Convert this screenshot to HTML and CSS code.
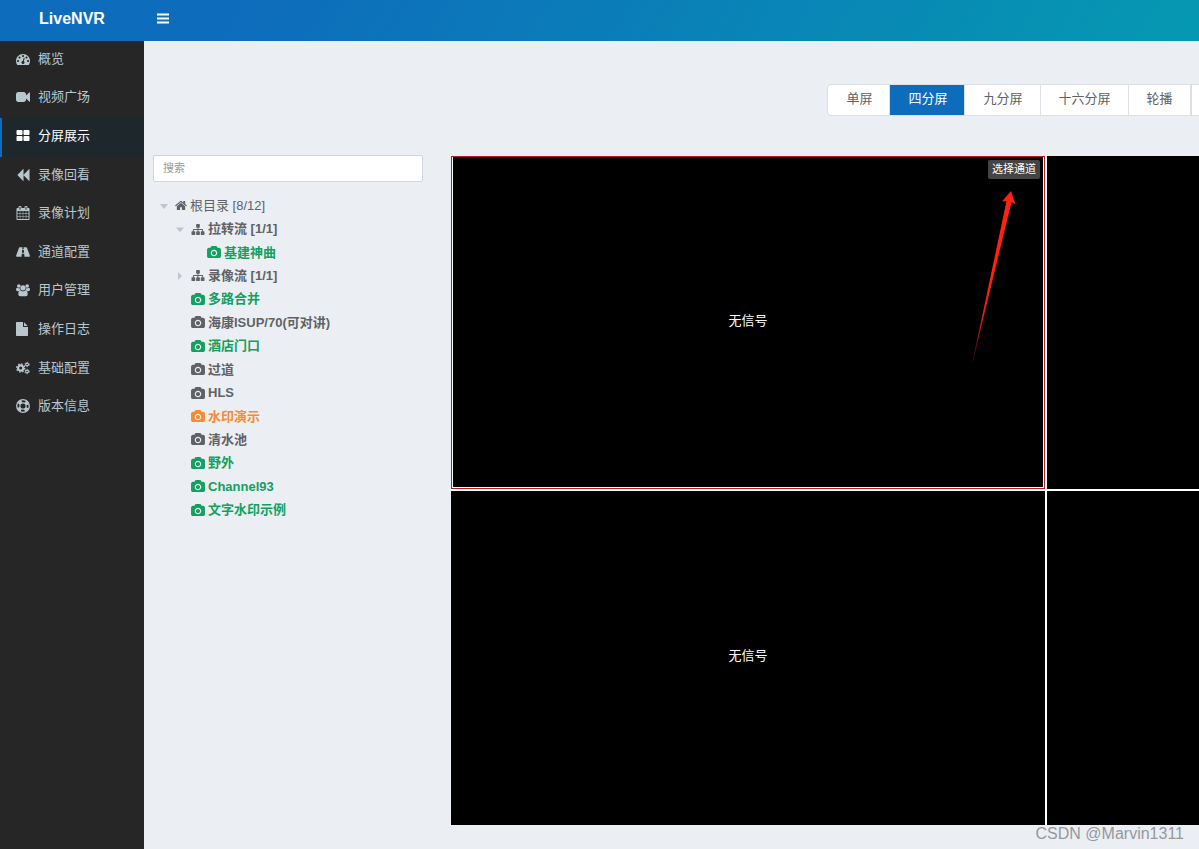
FILE: index.html
```html
<!DOCTYPE html>
<html lang="zh-CN">
<head>
<meta charset="utf-8">
<title>LiveNVR</title>
<meta name="viewport" content="width=device-width, initial-scale=1">
<link rel="stylesheet" href="styles.css">
</head>
<body>
<svg class="sprite" aria-hidden="true">
  <symbol id="i-dash" viewBox="0 0 1792 1792"><path d="M384 1152q0-53-37.500-90.500t-90.500-37.500-90.500 37.500-37.500 90.500 37.500 90.500 90.500 37.500 90.500-37.500 37.500-90.500zm192-448q0-53-37.500-90.500t-90.500-37.500-90.500 37.500-37.500 90.500 37.500 90.500 90.500 37.500 90.500-37.500 37.500-90.500zm428 481l101-382q6-26-7.500-48.500t-38.500-29.500-48 6.500-30 39.500l-101 382q-60 5-107 43.500t-63 98.500q-20 77 20 146t117 89 146-20 89-117q16-60-6-117t-72-91zm660-33q0-53-37.500-90.500t-90.500-37.500-90.500 37.500-37.500 90.500 37.500 90.500 90.500 37.500 90.500-37.500 37.500-90.500zm-640-640q0-53-37.500-90.500t-90.500-37.500-90.500 37.500-37.500 90.500 37.500 90.500 90.500 37.500 90.500-37.500 37.500-90.500zm448 192q0-53-37.500-90.500t-90.500-37.500-90.500 37.500-37.500 90.500 37.500 90.500 90.500 37.500 90.500-37.500 37.500-90.500zm320 448q0 261-141 483-19 29-54 29h-1402q-35 0-54-29-141-221-141-483 0-182 71-348t191-286 286-191 348-71 348 71 286 191 191 286 71 348z"/></symbol>
  <symbol id="i-video" viewBox="0 0 1792 1792"><path d="M1792 352v1088q0 42-39 59-13 5-25 5-27 0-45-19l-403-403v166q0 119-84.500 203.500t-203.500 84.500h-704q-119 0-203.500-84.500t-84.500-203.500v-704q0-119 84.500-203.500t203.500-84.500h704q119 0 203.500 84.500t84.500 203.500v165l403-402q18-19 45-19 12 0 25 5 39 17 39 59z"/></symbol>
  <symbol id="i-split" viewBox="0 0 1792 1792"><path d="M832 1024v384q0 52-38 90t-90 38h-512q-52 0-90-38t-38-90v-384q0-52 38-90t90-38h512q52 0 90 38t38 90zm0-768v384q0 52-38 90t-90 38h-512q-52 0-90-38t-38-90v-384q0-52 38-90t90-38h512q52 0 90 38t38 90zm896 768v384q0 52-38 90t-90 38h-512q-52 0-90-38t-38-90v-384q0-52 38-90t90-38h512q52 0 90 38t38 90zm0-768v384q0 52-38 90t-90 38h-512q-52 0-90-38t-38-90v-384q0-52 38-90t90-38h512q52 0 90 38t38 90z"/></symbol>
  <symbol id="i-back" viewBox="0 0 1792 1792"><path d="M1683 141q19-19 32-13t13 32v1472q0 26-13 32t-32-13l-710-710q-9-9-13-19v710q0 26-13 32t-32-13l-710-710q-19-19-19-45t19-45l710-710q19-19 32-13t13 32v710q4-10 13-19z"/></symbol>
  <symbol id="i-cal" viewBox="0 0 1792 1792"><path d="M192 1664h288v-288h-288v288zm352 0h320v-288h-320v288zm-352-352h288v-320h-288v320zm352 0h320v-320h-320v320zm-352-384h288v-288h-288v288zm736 736h320v-288h-320v288zm-384-736h320v-288h-320v288zm768 736h288v-288h-288v288zm-384-352h320v-320h-320v320zm-352-864v-288q0-13-9.500-22.500t-22.500-9.500h-64q-13 0-22.500 9.500t-9.500 22.500v288q0 13 9.500 22.500t22.500 9.500h64q13 0 22.500-9.500t9.500-22.500zm736 864h288v-320h-288v320zm-384-384h320v-288h-320v288zm384 0h288v-288h-288v288zm32-480v-288q0-13-9.500-22.500t-22.500-9.500h-64q-13 0-22.500 9.500t-9.500 22.500v288q0 13 9.500 22.500t22.500 9.500h64q13 0 22.500-9.500t9.500-22.500zm384-64v1280q0 52-38 90t-90 38h-1408q-52 0-90-38t-38-90v-1280q0-52 38-90t90-38h128v-96q0-66 47-113t113-47h64q66 0 113 47t47 113v96h384v-96q0-66 47-113t113-47h64q66 0 113 47t47 113v96h128q52 0 90 38t38 90z"/></symbol>
  <symbol id="i-road" viewBox="0 0 16 16"><path d="M4.300 2.500h3.100l-.2 2h1.600l-.2-2h3.100q.5 0 .8.700l3.200 8.600q.5 1.700-.6 1.700H9.700l-.3-3.500H6.600l-.3 3.500H.900q-1.100 0-.6-1.700l3.200-8.600q.3-.7.800-.7zM7.100 5.500l-.3 3.300h2.400l-.3-3.300z" fill-rule="evenodd"/></symbol>
  <symbol id="i-users" viewBox="0 0 17 16"><circle cx="3.400" cy="3.200" r="2.200"/><circle cx="13.600" cy="3.200" r="2.200"/><circle cx="8.500" cy="5.400" r="3.200"/><path d="M1.700 5.400q1.500 1 3 .4.100 1.500 1 2.600-1.300.1-2.100 1.100H2Q0 9.500 0 7.800q0-2.700 1.700-2.400zM15.300 5.400q-1.500 1-3 .4-.1 1.500-1 2.600 1.300.1 2.100 1.100H15q2 0 2-1.700 0-2.700-1.700-2.400zM5.700 8.700q2.800 2 5.600 0 2.900.1 2.900 4.500 0 2.300-2.300 2.300H5.100q-2.300 0-2.300-2.300 0-4.400 2.900-4.500z"/></symbol>
  <symbol id="i-file" viewBox="128 0 1792 1792"><path d="M1152 512v-472q22 14 36 28l408 408q14 14 28 36h-472zm-128 32q0 40 28 68t68 28h544v1056q0 40-28 68t-68 28h-1344q-40 0-68-28t-28-68v-1600q0-40 28-68t68-28h800v544z"/></symbol>
  <symbol id="i-cogs" viewBox="0 0 17 16"><g fill="none" stroke="currentColor"><circle cx="5.700" cy="8" r="3.200" stroke-width="2.600"/><circle cx="5.700" cy="8" r="4.900" stroke-width="1.600" stroke-dasharray="1.900 1.950"/><circle cx="13.400" cy="3.700" r="1.700" stroke-width="1.400"/><circle cx="13.400" cy="3.700" r="2.700" stroke-width="1" stroke-dasharray="1.400 1.427"/><circle cx="13.400" cy="12.300" r="1.700" stroke-width="1.400"/><circle cx="13.400" cy="12.300" r="2.700" stroke-width="1" stroke-dasharray="1.400 1.427"/></g></symbol>
  <symbol id="i-ring" viewBox="0 0 16 16"><g fill="none" stroke="currentColor"><circle cx="8" cy="8" r="7.200" stroke-width="1.500"/><circle cx="8" cy="8" r="3.600" stroke-width="1.300"/><circle cx="8" cy="8" r="5.300" stroke-width="3.600" stroke-dasharray="4.160 4.165" stroke-dashoffset="-2.080"/></g></symbol>
  <symbol id="i-cam" viewBox="-64 0 1920 1792"><path d="M896 672q119 0 203.500 84.500t84.500 203.500-84.500 203.500-203.500 84.500-203.500-84.500-84.500-203.500 84.500-203.500 203.500-84.500zm704-416q106 0 181 75t75 181v896q0 106-75 181t-181 75h-1408q-106 0-181-75t-75-181v-896q0-106 75-181t181-75h224l51-136q19-49 69.500-84.500t103.500-35.500h512q53 0 103.500 35.500t69.500 84.500l51 136h224zm-704 1152q185 0 316.500-131.500t131.500-316.500-131.500-316.500-316.500-131.500-316.500 131.500-131.500 316.500 131.500 316.500 316.500 131.500z"/></symbol>
  <symbol id="i-home" viewBox="64 0 1664 1792"><path d="M1472 992v480q0 26-19 45t-45 19h-384v-384h-256v384h-384q-26 0-45-19t-19-45v-480q0-1 .5-3t.5-3l575-474 575 474q1 2 1 6zm223-69l-62 74q-8 9-21 11h-3q-13 0-21-7l-692-577-692 577q-12 8-24 7-13-2-21-11l-62-74q-8-10-7-23.500t11-21.500l719-599q32-26 76-26t76 26l244 204v-195q0-14 9-23t23-9h192q14 0 23 9t9 23v408l219 182q10 8 11 21.500t-7 23.500z"/></symbol>
  <symbol id="i-site" viewBox="0 0 1792 1792"><path d="M1792 1248v320q0 40-28 68t-68 28h-320q-40 0-68-28t-28-68v-320q0-40 28-68t68-28h96v-192h-512v192h96q40 0 68 28t28 68v320q0 40-28 68t-68 28h-320q-40 0-68-28t-28-68v-320q0-40 28-68t68-28h96v-192h-512v192h96q40 0 68 28t28 68v320q0 40-28 68t-68 28h-320q-40 0-68-28t-28-68v-320q0-40 28-68t68-28h96v-192q0-52 38-90t90-38h512v-192h-96q-40 0-68-28t-28-68v-320q0-40 28-68t68-28h320q40 0 68 28t28 68v320q0 40-28 68t-68 28h-96v192h512q52 0 90 38t38 90v192h96q40 0 68 28t28 68z"/></symbol>
</svg>

<header class="topbar">
  <a class="brand" href="#">LiveNVR</a>
  <button class="toggle" type="button" aria-label="菜单">
    <svg viewBox="0 0 12 11" width="12" height="11"><path d="M0 .5h12v2H0zM0 4.500h12v2H0zM0 8.500h12v2H0z"/></svg>
  </button>
</header>

<div class="shell">
  <nav class="sidebar">
    <ul class="menu">
      <li><a class="menu-link" href="#"><svg class="menu-icon"><use href="#i-dash"/></svg>概览</a></li>
      <li><a class="menu-link" href="#"><svg class="menu-icon"><use href="#i-video"/></svg>视频广场</a></li>
      <li><a class="menu-link active" href="#"><svg class="menu-icon"><use href="#i-split"/></svg>分屏展示</a></li>
      <li><a class="menu-link" href="#"><svg class="menu-icon"><use href="#i-back"/></svg>录像回看</a></li>
      <li><a class="menu-link" href="#"><svg class="menu-icon"><use href="#i-cal"/></svg>录像计划</a></li>
      <li><a class="menu-link" href="#"><svg class="menu-icon"><use href="#i-road"/></svg>通道配置</a></li>
      <li><a class="menu-link" href="#"><svg class="menu-icon"><use href="#i-users"/></svg>用户管理</a></li>
      <li><a class="menu-link" href="#"><svg class="menu-icon"><use href="#i-file"/></svg>操作日志</a></li>
      <li><a class="menu-link" href="#"><svg class="menu-icon"><use href="#i-cogs"/></svg>基础配置</a></li>
      <li><a class="menu-link" href="#"><svg class="menu-icon"><use href="#i-ring"/></svg>版本信息</a></li>
    </ul>
  </nav>

  <main class="content">
    <div class="modes">
      <button class="mode" type="button">单屏</button>
      <button class="mode selected" type="button">四分屏</button>
      <button class="mode" type="button">九分屏</button>
      <button class="mode" type="button">十六分屏</button>
      <button class="mode" type="button">轮播</button>
      <button class="mode extra" type="button"></button>
    </div>

    <section class="channels">
      <input class="search" type="text" placeholder="搜索" aria-label="搜索">
      <ul class="tree">
        <li class="node root"><span class="caret open"></span><svg class="node-icon home"><use href="#i-home"/></svg>根目录 [8/12]</li>
        <li class="node"><span class="caret open"></span><svg class="node-icon"><use href="#i-site"/></svg>拉转流 [1/1]</li>
        <li class="node deep online"><span class="caret"></span><svg class="node-icon"><use href="#i-cam"/></svg>基建神曲</li>
        <li class="node"><span class="caret closed"></span><svg class="node-icon"><use href="#i-site"/></svg>录像流 [1/1]</li>
        <li class="node online"><span class="caret"></span><svg class="node-icon"><use href="#i-cam"/></svg>多路合并</li>
        <li class="node"><span class="caret"></span><svg class="node-icon"><use href="#i-cam"/></svg>海康ISUP/70(可对讲)</li>
        <li class="node online"><span class="caret"></span><svg class="node-icon"><use href="#i-cam"/></svg>酒店门口</li>
        <li class="node"><span class="caret"></span><svg class="node-icon"><use href="#i-cam"/></svg>过道</li>
        <li class="node"><span class="caret"></span><svg class="node-icon"><use href="#i-cam"/></svg>HLS</li>
        <li class="node playing"><span class="caret"></span><svg class="node-icon"><use href="#i-cam"/></svg>水印演示</li>
        <li class="node"><span class="caret"></span><svg class="node-icon"><use href="#i-cam"/></svg>清水池</li>
        <li class="node online"><span class="caret"></span><svg class="node-icon"><use href="#i-cam"/></svg>野外</li>
        <li class="node online"><span class="caret"></span><svg class="node-icon"><use href="#i-cam"/></svg>Channel93</li>
        <li class="node online"><span class="caret"></span><svg class="node-icon"><use href="#i-cam"/></svg>文字水印示例</li>
      </ul>
    </section>

    <section class="wall">
      <div class="screen current">
        <span>无信号</span>
        <button class="pick" type="button">选择通道</button>
        <svg class="arrow" viewBox="0 0 48 180" aria-hidden="true">
          <defs><linearGradient id="fade" x1="0" y1="1" x2="0" y2="0"><stop offset="0" stop-color="#f21" stop-opacity=".3"/><stop offset=".3" stop-color="#f21" stop-opacity=".9"/><stop offset=".5" stop-color="#f21"/></linearGradient></defs>
          <path fill="url(#fade)" d="M41 1L45.500 14.500L41.500 12L1 179L36.500 11L32 11.500Z"/>
        </svg>
      </div>
      <div class="screen"></div>
      <div class="screen"><span>无信号</span></div>
      <div class="screen"></div>
    </section>
  </main>
</div>
<div class="credit">CSDN @Marvin1311</div>
</body>
</html>
```

FILE: styles.css
```css
* {
  box-sizing: border-box;
}

body {
  margin: 0;
  min-height: 100vh;
  display: flex;
  flex-direction: column;
  position: relative;
  overflow: hidden;
  background: #ebeff4;
  color: #606266;
  font: 13px/18px "Liberation Sans", "Noto Sans CJK SC", sans-serif;
}

button,
input {
  font: inherit;
}

ul {
  list-style: none;
  margin: 0;
  padding: 0;
}

svg {
  fill: currentColor;
}

.sprite {
  position: absolute;
  width: 0;
  height: 0;
}

.topbar {
  display: flex;
  align-items: center;
  height: 41px;
  padding-bottom: 4px;
  background: linear-gradient(120deg, #0e6cbc 20%, #0599b2 100%);
  color: #fff;
}

.brand {
  width: 144px;
  color: inherit;
  font-size: 16px;
  font-weight: bold;
  text-align: center;
  text-decoration: none;
}

.toggle {
  display: flex;
  padding: 8px 13px;
  border: 0;
  background: none;
  color: inherit;
}

.shell {
  flex: 1;
  display: flex;
}

.sidebar {
  flex: 0 0 144px;
  background: #262626;
}

/* Ten equal rows */
.menu {
  display: grid;
  grid-auto-rows: 1fr;
  height: 386px;
}

.menu-link {
  display: flex;
  align-items: center;
  gap: 8px;
  height: 100%;
  padding: 0 14px 3px;
  border-left: 2px solid transparent;
  color: #b8c7ce;
  text-decoration: none;
}

.menu-link.active {
  border-left-color: #0e6cbc;
  background: #1e282c;
  color: #fff;
}

.menu-icon {
  width: 14px;
  height: 14px;
}

.content {
  flex: 1;
  min-width: 0;
  display: grid;
  grid-template-columns: 270px minmax(1190px, 1fr);
  grid-template-rows: auto 1fr;
  column-gap: 28px;
  padding: 43px 9px 24px;
  overflow: hidden;
}

.modes {
  grid-column: 2;
  justify-self: center;
  display: flex;
  height: 32px;
  margin-bottom: 39px;
  border: 1px solid #dcdfe6;
  border-radius: 4px;
  background: #fff;
}

.mode {
  padding: 0 17px 2px 18px;
  border: 0;
  border-right: 1px solid #dcdfe6;
  background: none;
  color: #606266;
}

.mode.selected {
  background: #0e6cbc;
  color: #fff;
}

.mode.extra {
  width: 73px;
  border-right: 0;
  border-left: 1px solid #dcdfe6;
}

.channels {
  grid-column: 1;
}

.search {
  display: block;
  width: 100%;
  height: 27px;
  padding: 0 9px 2px;
  border: 1px solid #cfd5e0;
  border-radius: 2px;
  background: #fff;
  font-size: 11px;
}

.search::placeholder {
  color: #999;
}

/* Fourteen equal rows */
.tree {
  display: grid;
  grid-auto-rows: 1fr;
  height: 328px;
  margin-top: 12px;
}

.node {
  display: flex;
  align-items: center;
  gap: 3px;
  padding-left: 22px;
  font-weight: bold;
}

.node.root {
  padding-left: 6px;
  font-weight: normal;
}

.node.deep {
  padding-left: 38px;
}

.node.online {
  color: #13a060;
}

.node.playing {
  color: #f98a2e;
}

.caret {
  width: 10px;
  height: 8px;
  margin-right: 3px;
}

.caret.open {
  background: #c0c4cc;
  clip-path: polygon(10% 30%, 90% 30%, 50% 90%);
}

.caret.closed {
  background: #c0c4cc;
  clip-path: polygon(30% 0, 70% 50%, 30% 100%);
}

.node-icon {
  width: 14px;
  height: 13px;
}

.node-icon.home {
  width: 12px;
}

.wall {
  display: grid;
  grid-template-columns: 1fr 1fr;
  grid-template-rows: 333fr 334fr;
  gap: 2px;
  aspect-ratio: 16 / 9;
  align-self: start;
  margin-top: 1px;
  background: #fff;
}

.screen {
  position: relative;
  display: flex;
  align-items: center;
  justify-content: center;
  padding-bottom: 4px;
  background: #000;
  color: #fff;
}

.screen.current {
  border: 1px solid #b01c20;
  box-shadow: inset 1px 0 #fff, inset -1px -1px #fff;
}

.pick {
  position: absolute;
  top: 3px;
  right: 4px;
  height: 19px;
  padding: 0 4px;
  border: 0;
  border-radius: 2px;
  background: #444;
  color: #fff;
  font-size: 11px;
  line-height: 17px;
}

.arrow {
  position: absolute;
  top: 33px;
  right: 26px;
  width: 48px;
  height: 180px;
}

.credit {
  position: absolute;
  right: 15px;
  bottom: 6px;
  color: #95989c;
  font-family: "Liberation Sans", sans-serif;
  font-size: 16px;
}
```
